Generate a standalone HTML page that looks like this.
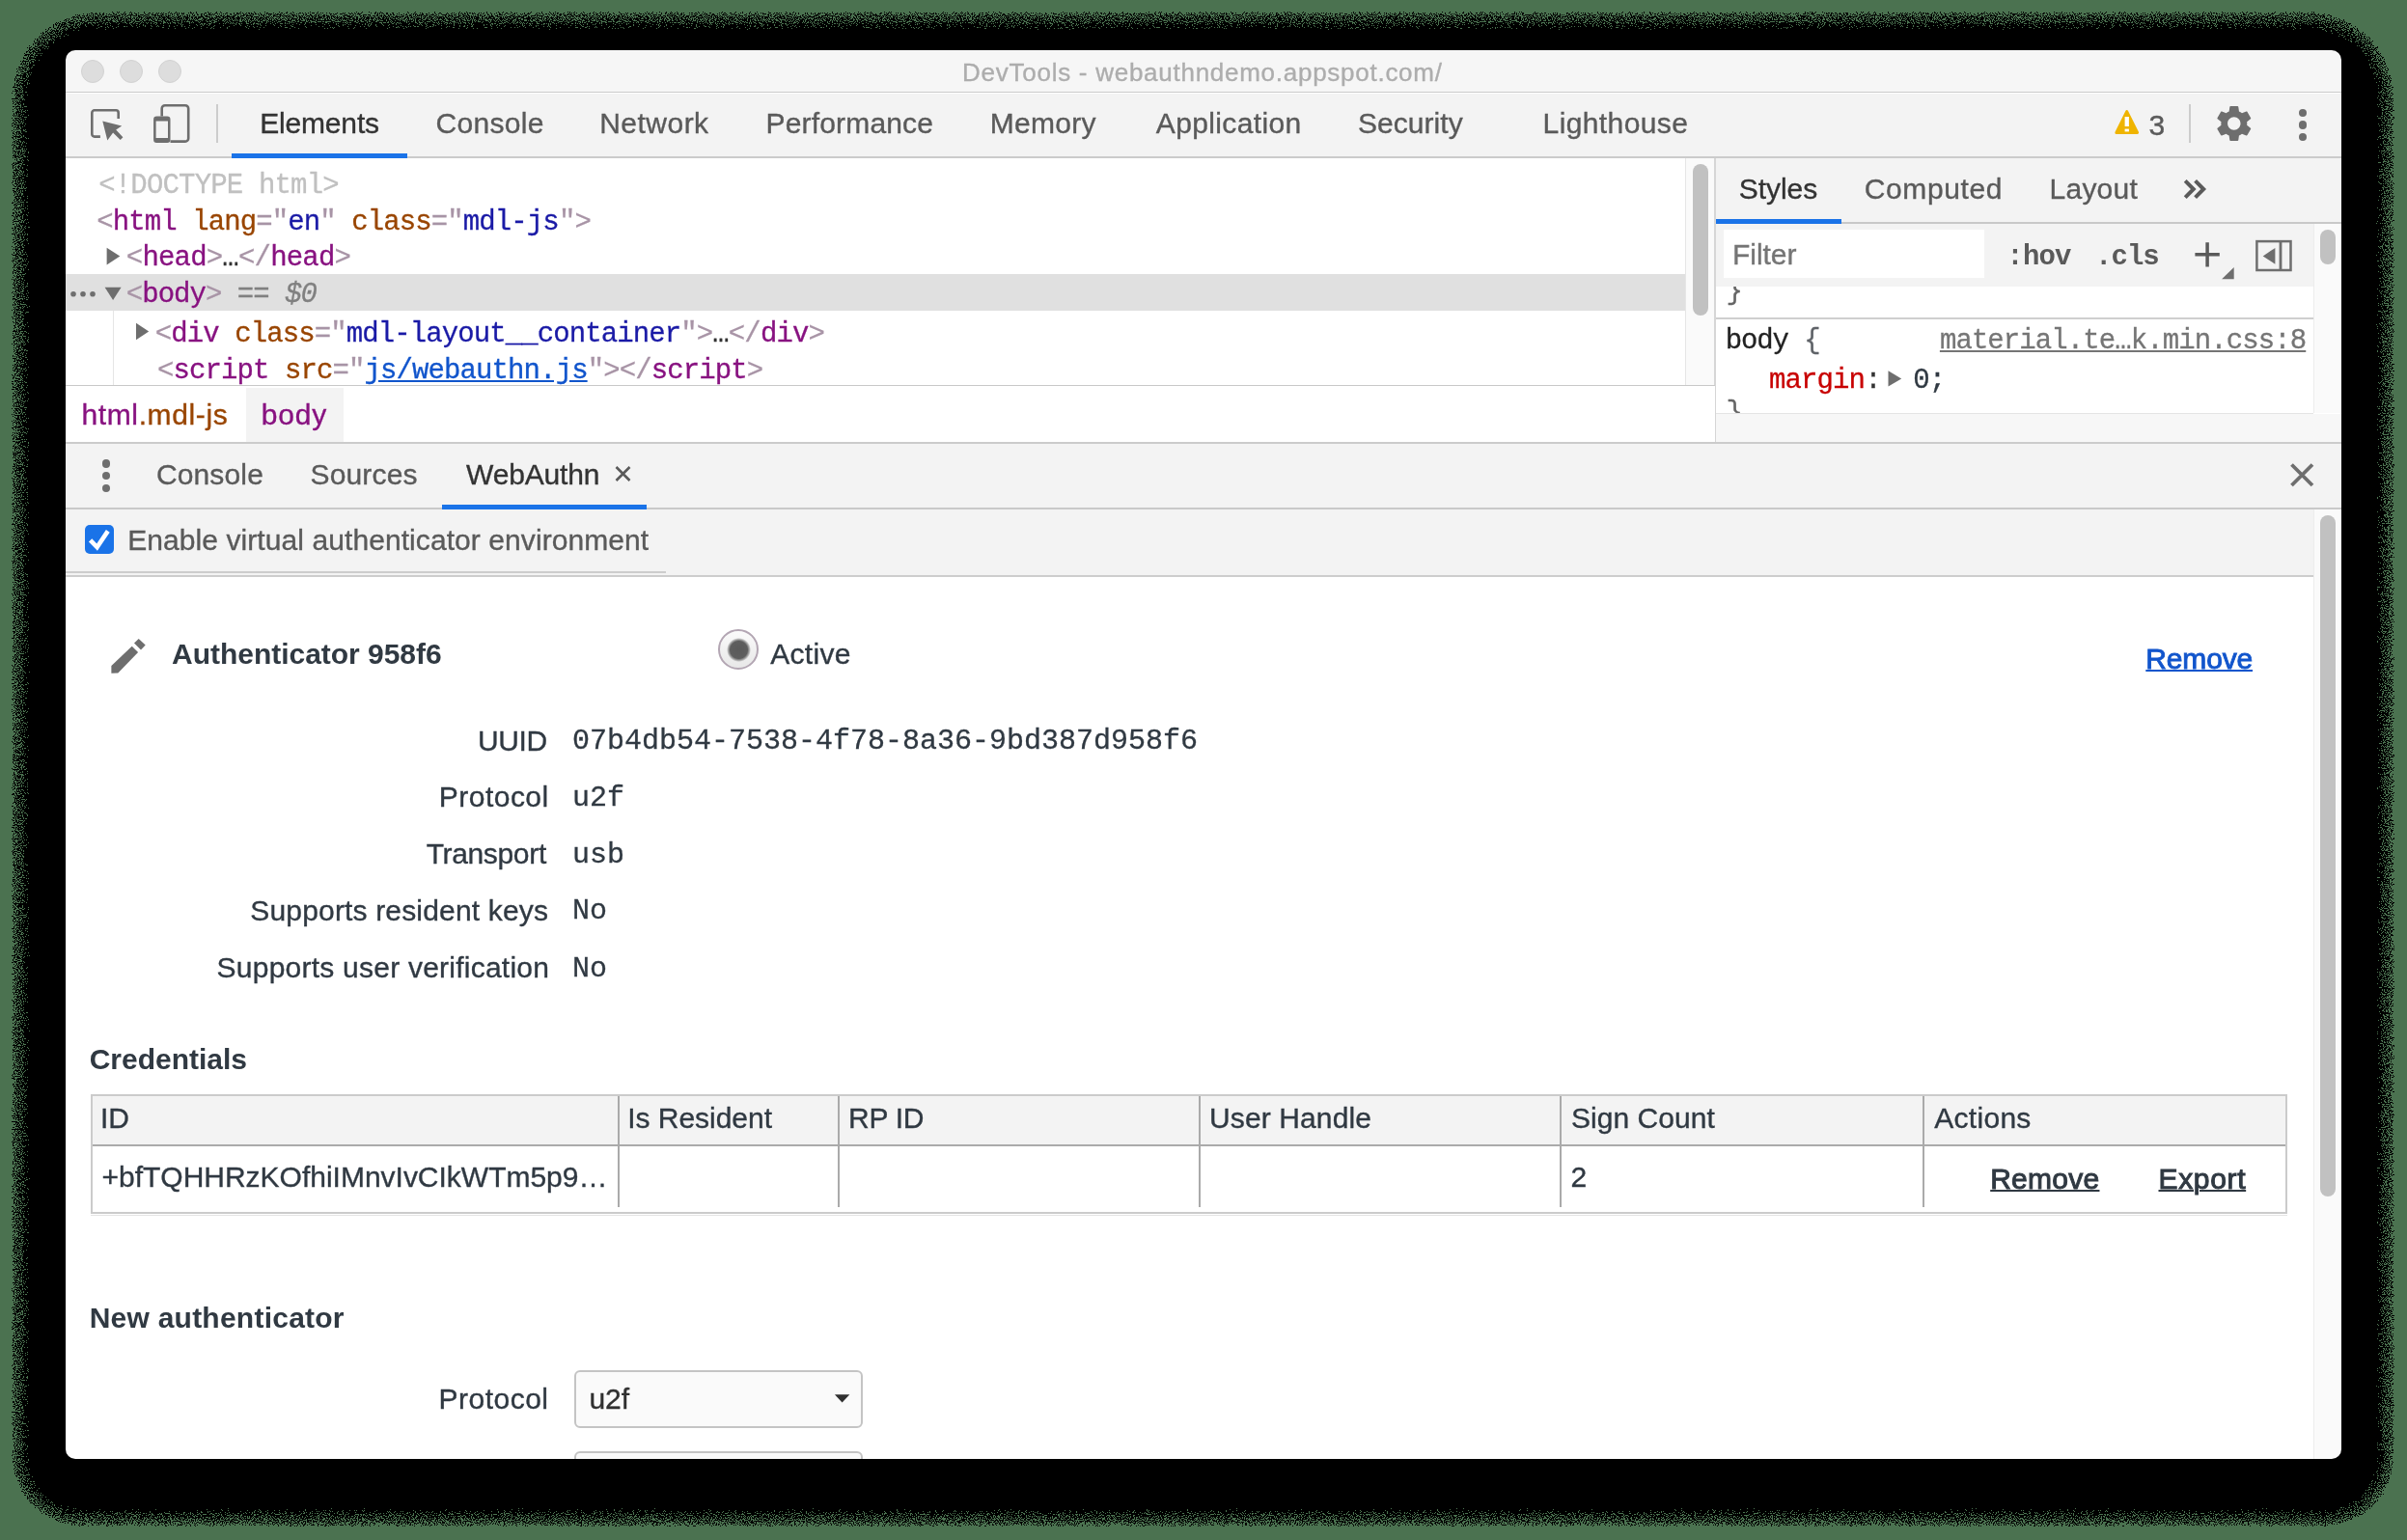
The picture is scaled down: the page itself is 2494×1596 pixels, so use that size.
<!DOCTYPE html>
<html lang="en"><head><meta charset="utf-8"><title>DevTools - webauthndemo.appspot.com/</title>
<style>
html,body{margin:0;padding:0;}
body{width:2494px;height:1596px;overflow:hidden;background:#4b7250;position:relative;font-family:"Liberation Sans",sans-serif;}
.b{position:absolute;box-sizing:border-box;}
.t{-webkit-text-stroke:0.35px currentColor;position:absolute;white-space:pre;font-family:"Liberation Sans",sans-serif;font-size:30px;line-height:30px;color:#303942;}
.m{-webkit-text-stroke:0.3px currentColor;position:absolute;white-space:pre;font-family:"Liberation Mono",monospace;font-size:29px;line-height:30px;letter-spacing:-0.9px;color:#222;}
.tab{color:#5a5a5a;}
.sel{color:#333;}
.bold{font-weight:bold;-webkit-text-stroke:0;}
.tg{color:#a894a6;} .tn{color:#881280;} .an{color:#994500;} .av{color:#1a1aa6;}
.lnk{color:#1155cc;text-decoration:underline;}
svg{position:absolute;overflow:visible;}
#win{will-change:transform;position:absolute;left:0;top:0;width:2494px;height:1596px;clip-path:inset(52px 68px 84px 68px round 10px);background:#fff;}
</style></head><body>

<svg width="2494" height="1596" style="left:0;top:0" viewBox="0 0 2494 1596">
<defs><filter id="dz" x="0" y="0" width="2494" height="1596" filterUnits="userSpaceOnUse" color-interpolation-filters="sRGB">
<feGaussianBlur in="SourceAlpha" stdDeviation="6" result="bl0"/>
<feComponentTransfer in="bl0" result="bl"><feFuncA type="table" tableValues="0.000 0.000 0.330 0.363 0.395 0.428 0.461 0.493 0.511 0.525 0.539 0.553 0.568 0.582 0.596 0.610 0.624 0.638 0.652 0.666 0.680 0.695 0.710 0.725 0.739 0.754 0.769 0.784 0.799 0.814 0.828 0.843 0.858 0.875 0.902 0.928 0.955 0.981 1.000 1.000 1.000"/></feComponentTransfer>
<feTurbulence type="fractalNoise" baseFrequency="0.85" numOctaves="1" seed="7" result="nz"/>
<feComponentTransfer in="nz" result="nu"><feFuncR type="table" tableValues="0.0000 0.0000 0.0001 0.0003 0.0018 0.0076 0.0261 0.0727 0.1658 0.3137 0.5000 0.6863 0.8342 0.9273 0.9739 0.9924 0.9982 0.9997 0.9999 1.0000 1.0000"/></feComponentTransfer>
<feColorMatrix in="nu" type="matrix" values="0 0 0 0 0  0 0 0 0 0  0 0 0 0 0  1 0 0 0 0" result="n1"/>
<feComposite in="bl" in2="n1" operator="arithmetic" k1="0" k2="1.04" k3="1" k4="-0.52" result="c1"/>
<feComponentTransfer in="c1"><feFuncA type="discrete" tableValues="0 1"/></feComponentTransfer>
</filter></defs>
<path d="M100.5 22.5 H2392.5 A78 78 0 0 1 2470.5 100.5 V1509.5 A62 62 0 0 1 2408.5 1571.5 H84.5 A62 62 0 0 1 22.5 1509.5 V100.5 A78 78 0 0 1 100.5 22.5 Z" fill="#000" filter="url(#dz)"/>
<rect x="40" y="40" width="2412" height="1512" rx="50" fill="#000"/>
</svg>

<div id="win">
<div class="b " style="left:68px;top:52px;width:2358px;height:44px;background:#f6f6f6;"></div>
<div class="b " style="left:68px;top:95px;width:2358px;height:1.2999999999999972px;background:#cacaca;"></div>
<div class="b " style="left:84px;top:62px;width:24px;height:24px;border-radius:50%;background:#dddddd;border:1.5px solid #d2d2d2;"></div>
<div class="b " style="left:124px;top:62px;width:24px;height:24px;border-radius:50%;background:#dddddd;border:1.5px solid #d2d2d2;"></div>
<div class="b " style="left:164px;top:62px;width:24px;height:24px;border-radius:50%;background:#dddddd;border:1.5px solid #d2d2d2;"></div>
<span class="t title" style="left:997.10px;top:62.1px;font-size:26px;line-height:26px;letter-spacing:0.734px;color:#adadad;">DevTools - webauthndemo.appspot.com/</span>
<div class="b " style="left:68px;top:97px;width:2358px;height:65px;background:#f3f3f3;"></div>
<div class="b " style="left:68px;top:162px;width:2358px;height:2px;background:#cbcbcb;"></div>
<div class="b " style="left:240px;top:159px;width:182px;height:5px;background:#1a73e8;"></div>
<svg style="left:90px;top:105px" width="44" height="46" viewBox="90 105 44 46">
<path d="M122.7 122.9 V116.9 a2.6 2.6 0 0 0 -2.6 -2.6 H97.9 a2.6 2.6 0 0 0 -2.6 2.6 V139 a2.6 2.6 0 0 0 2.6 2.6 H103.9" fill="none" stroke="#6e6e6e" stroke-width="2.6"/>
<path d="M106.3 125.6 L126.2 130.6 L120.2 134.6 L127.4 142.3 L124.7 145.0 L117.1 137.6 L111.3 145.5 Z" fill="#6e6e6e"/>
</svg>
<svg style="left:155px;top:104px" width="46" height="48" viewBox="155 104 46 48">
<path d="M167.7 120.6 V112.5 a3.2 3.2 0 0 1 3.2 -3.2 H192 a3.2 3.2 0 0 1 3.2 3.2 V143.4 a3.2 3.2 0 0 1 -3.2 3.2 H176.5" fill="none" stroke="#6e6e6e" stroke-width="2.6"/>
<path fill-rule="evenodd" d="M162.3 120.6 H173.3 a3.2 3.2 0 0 1 3.2 3.2 V144.7 a3.2 3.2 0 0 1 -3.2 3.2 H162.3 a3.2 3.2 0 0 1 -3.2 -3.2 V123.8 a3.2 3.2 0 0 1 3.2 -3.2 Z M161.6 125.6 V143.1 H174 V125.6 Z" fill="#6e6e6e"/>
</svg>
<div class="b " style="left:224px;top:108px;width:2px;height:40px;background:#cccccc;"></div>
<span class="t sel tb_Elements" style="left:269.20px;top:112.8px;letter-spacing:-0.171px;">Elements</span>
<span class="t tab tb_Console" style="left:451.60px;top:112.8px;letter-spacing:0.283px;">Console</span>
<span class="t tab tb_Network" style="left:621.20px;top:112.8px;letter-spacing:0.483px;">Network</span>
<span class="t tab tb_Performance" style="left:793.60px;top:112.8px;letter-spacing:0.160px;">Performance</span>
<span class="t tab tb_Memory" style="left:1025.80px;top:112.8px;letter-spacing:0.280px;">Memory</span>
<span class="t tab tb_Application" style="left:1197.80px;top:112.8px;letter-spacing:0.360px;">Application</span>
<span class="t tab tb_Security" style="left:1407.00px;top:112.8px;letter-spacing:0.043px;">Security</span>
<span class="t tab tb_Lighthouse" style="left:1598.60px;top:112.8px;letter-spacing:0.389px;">Lighthouse</span>
<svg style="left:2188px;top:110px" width="32" height="32" viewBox="2188 110 32 32">
<path d="M2203.7 115.6 L2214.6 137.4 H2192.9 Z" fill="#efb400" stroke="#efb400" stroke-width="3" stroke-linejoin="round"/>
<rect x="2201.6" y="121" width="4.3" height="10" fill="#fff"/><rect x="2201.6" y="133.6" width="4.3" height="2.8" fill="#fff"/>
</svg>
<span class="t tab n3" style="left:2226.40px;top:115.0px;">3</span>
<div class="b " style="left:2268px;top:108px;width:2px;height:40px;background:#cccccc;"></div>
<svg style="left:0;top:0" width="2494" height="1596"><g transform="translate(2292.36,105.56) scale(1.8698)"><path d="M19.14,12.94c0.04-0.3,0.06-0.61,0.06-0.94c0-0.32-0.02-0.64-0.07-0.94l2.03-1.58c0.18-0.14,0.23-0.41,0.12-0.61 l-1.92-3.32c-0.12-0.22-0.37-0.29-0.59-0.22l-2.39,0.96c-0.5-0.38-1.03-0.7-1.62-0.94L14.4,2.81c-0.04-0.24-0.24-0.41-0.48-0.41 h-3.84c-0.24,0-0.43,0.17-0.47,0.41L9.25,5.35C8.66,5.59,8.12,5.92,7.63,6.29L5.24,5.33c-0.22-0.08-0.47,0-0.59,0.22L2.74,8.87 C2.62,9.08,2.66,9.34,2.86,9.48l2.03,1.58C4.84,11.36,4.8,11.69,4.8,12s0.02,0.64,0.07,0.94l-2.03,1.58 c-0.18,0.14-0.23,0.41-0.12,0.61l1.92,3.32c0.12,0.22,0.37,0.29,0.59,0.22l2.39-0.96c0.5,0.38,1.03,0.7,1.62,0.94l0.36,2.54 c0.05,0.24,0.24,0.41,0.48,0.41h3.84c0.24,0,0.44-0.17,0.47-0.41l0.36-2.54c0.59-0.24,1.13-0.56,1.62-0.94l2.39,0.96 c0.22,0.08,0.47,0,0.59-0.22l1.92-3.32c0.12-0.22,0.07-0.47-0.12-0.61L19.14,12.94z M12,15.6c-1.98,0-3.6-1.62-3.6-3.6 s1.62-3.6,3.6-3.6s3.6,1.62,3.6,3.6S13.98,15.6,12,15.6z" fill="#6e6e6e"/></g></svg>
<div class="b " style="left:2382.0px;top:112.6px;width:8.399999999999636px;height:8.400000000000006px;border-radius:50%;background:#6e6e6e;"></div>
<div class="b " style="left:2382.0px;top:125.2px;width:8.399999999999636px;height:8.399999999999991px;border-radius:50%;background:#6e6e6e;"></div>
<div class="b " style="left:2382.0px;top:137.70000000000002px;width:8.399999999999636px;height:8.399999999999977px;border-radius:50%;background:#6e6e6e;"></div>
<div class="b " style="left:68px;top:164px;width:1678px;height:235px;background:#fff;"></div>
<div class="b " style="left:68px;top:284px;width:1678px;height:37.5px;background:#e0e0e0;"></div>
<div class="b " style="left:116.5px;top:321.5px;width:1.5px;height:77.5px;background:#e6e6e6;"></div>
<div class="b " style="left:1746px;top:164px;width:31px;height:235px;background:#fafafa;border-left:1.5px solid #e6e6e6;"></div>
<div class="b " style="left:1754px;top:169.5px;width:16px;height:157.5px;background:#c1c1c1;border-radius:8px;"></div>
<div class="b " style="left:1776px;top:164px;width:2px;height:294px;background:#d6d6d6;"></div>
<span class="m r0" style="left:102.20px;top:178.4px;letter-spacing:-0.829px;color:#c0c0c0;">&lt;!DOCTYPE html&gt;</span>
<span class="m r1" style="left:100.20px;top:215.8px;"><span class="tg">&lt;</span><span class="tn">html</span> <span class="an">lang</span><span class="tg">=&quot;</span><span class="av">en</span><span class="tg">&quot;</span> <span class="an">class</span><span class="tg">=&quot;</span><span class="av">mdl-js</span><span class="tg">&quot;&gt;</span></span>
<span class="m r2" style="left:130.80px;top:253.4px;letter-spacing:-0.815px;"><span class="tg">&lt;</span><span class="tn">head</span><span class="tg">&gt;</span><span style="color:#333">…</span><span class="tg">&lt;/</span><span class="tn">head</span><span class="tg">&gt;</span></span>
<span class="m r3" style="left:130.80px;top:291.1px;letter-spacing:-0.973px;"><span class="tg">&lt;</span><span class="tn">body</span><span class="tg">&gt;</span><span style="color:#808080"> == <i>$0</i></span></span>
<span class="m r4" style="left:160.70px;top:331.8px;"><span class="tg">&lt;</span><span class="tn">div</span> <span class="an">class</span><span class="tg">=&quot;</span><span class="av">mdl-layout__container</span><span class="tg">&quot;&gt;</span><span style="color:#333">…</span><span class="tg">&lt;/</span><span class="tn">div</span><span class="tg">&gt;</span></span>
<span class="m r5" style="left:163.00px;top:369.6px;"><span class="tg">&lt;</span><span class="tn">script</span> <span class="an">src</span><span class="tg">=&quot;</span><span class="lnk">js/webauthn.js</span><span class="tg">&quot;&gt;</span><span class="tg">&lt;/</span><span class="tn">script</span><span class="tg">&gt;</span></span>
<svg style="left:0;top:0" width="2494" height="1596">
<path d="M110.6 256.7 L124.3 265.5 L110.6 274.4 Z" fill="#6e6e6e"/>
<path d="M108.6 297.8 H125.6 L117.1 311 Z" fill="#6e6e6e"/>
<path d="M141 334.7 L154.2 343.4 L141 352.2 Z" fill="#6e6e6e"/>
<circle cx="76" cy="304.8" r="2.8" fill="#6e6e6e"/><circle cx="86" cy="304.8" r="2.8" fill="#6e6e6e"/><circle cx="96" cy="304.8" r="2.8" fill="#6e6e6e"/>
</svg>
<div class="b " style="left:68px;top:398.5px;width:1709px;height:1.5px;background:#c8c8c8;"></div>
<div class="b " style="left:68px;top:400px;width:1709px;height:58px;background:#fff;"></div>
<div class="b " style="left:254.5px;top:402px;width:101.5px;height:55.5px;background:#f3f3f3;"></div>
<span class="t bc1" style="left:84.50px;top:414.8px;letter-spacing:0.620px;"><span style="color:#881280">html</span><span style="color:#994500">.mdl-js</span></span>
<span class="t bc2" style="left:270.70px;top:414.8px;letter-spacing:0.867px;color:#881280;">body</span>
<div class="b " style="left:1778px;top:164px;width:648px;height:67px;background:#f3f3f3;"></div>
<div class="b " style="left:1778px;top:230px;width:648px;height:2px;background:#c8c8c8;"></div>
<div class="b " style="left:1778px;top:226.5px;width:130px;height:5.0px;background:#1a73e8;"></div>
<span class="t sel st1" style="left:1801.70px;top:181.0px;letter-spacing:-0.020px;">Styles</span>
<span class="t tab st2" style="left:1931.80px;top:181.0px;letter-spacing:0.600px;">Computed</span>
<span class="t tab st3" style="left:2123.60px;top:181.0px;letter-spacing:0.220px;">Layout</span>
<svg style="left:0;top:0" width="2494" height="1596"><path d="M2264.2 187.4 L2272.8 196 L2264.2 204.6 M2274.6 187.4 L2283.2 196 L2274.6 204.6" fill="none" stroke="#5a5a5a" stroke-width="4"/></svg>
<div class="b " style="left:1778px;top:232px;width:619px;height:65px;background:#f3f3f3;"></div>
<div class="b " style="left:1786px;top:238px;width:270px;height:50px;background:#fff;"></div>
<span class="t flt" style="left:1795.00px;top:248.7px;letter-spacing:-0.040px;color:#757575;">Filter</span>
<span class="m hov" style="left:2079.30px;top:252.2px;letter-spacing:-0.800px;font-weight:bold;color:#5a5a5a;-webkit-text-stroke:0;">:hov</span>
<span class="m cls" style="left:2171.10px;top:252.2px;letter-spacing:-1.000px;font-weight:bold;color:#5a5a5a;-webkit-text-stroke:0;">.cls</span>
<svg style="left:0;top:0" width="2494" height="1596">
<path d="M2274.4 263.8 H2299.8 M2287.1 251.2 V276.4" stroke="#5a5a5a" stroke-width="3.5" fill="none"/>
<path d="M2302.1 289.2 H2314.7 V276.9 Z" fill="#6e6e6e"/>
<rect x="2338.4" y="250.1" width="35.1" height="29.9" fill="none" stroke="#6e6e6e" stroke-width="2.5"/>
<path d="M2363 250 V280" stroke="#6e6e6e" stroke-width="2.8"/>
<path d="M2344.7 265.4 L2357.4 256.9 V273.8 Z" fill="#6e6e6e"/>
</svg>
<div class="b " style="left:2397px;top:232px;width:29px;height:196px;background:#fafafa;border-left:1.5px solid #ececec;"></div>
<div class="b " style="left:2404px;top:238px;width:16px;height:36px;background:#c1c1c1;border-radius:8px;"></div>
<div class="b " style="left:1778px;top:297px;width:619px;height:131px;background:#fff;"></div>
<div class="b " style="left:1778px;top:328.5px;width:619px;height:2.0px;background:#cfcfcf;"></div>
<div class="b" style="left:1778px;top:297px;width:619px;height:31px;overflow:hidden;"><span class="m" style="left:10.5px;top:-8.7px;color:#666;">}</span></div>
<span class="m sb" style="left:1787.70px;top:339.3px;letter-spacing:-1.100px;">body <span style="color:#5f6368">{</span></span>
<span class="m sm" style="left:2009.90px;top:339.3px;letter-spacing:-0.909px;color:#757575;text-decoration:underline;">material.te…k.min.css:8</span>
<span class="m mg" style="left:1833.10px;top:379.6px;"><span style="color:#c80000">margin</span><span style="color:#333">:</span></span>
<span class="m mz" style="left:1982.30px;top:379.6px;color:#303942;">0;</span>
<svg style="left:0;top:0" width="2494" height="1596"><path d="M1956.5 384.2 L1970.2 392.4 L1956.5 400.6 Z" fill="#6e6e6e"/></svg>
<div class="b" style="left:1778px;top:404px;width:619px;height:24px;overflow:hidden;"><span class="m" style="left:10.5px;top:10.3px;color:#666;">}</span></div>
<div class="b " style="left:1778px;top:427.5px;width:619px;height:1.5px;background:#e4e4e4;"></div>
<div class="b " style="left:1778px;top:429px;width:648px;height:29px;background:#f7f7f7;"></div>
<div class="b " style="left:68px;top:458px;width:2358px;height:2px;background:#cbcbcb;"></div>
<div class="b " style="left:68px;top:460px;width:2358px;height:67px;background:#f3f3f3;"></div>
<div class="b " style="left:68px;top:526px;width:2358px;height:2px;background:#c9c9c9;"></div>
<div class="b " style="left:458px;top:523px;width:212px;height:5.5px;background:#1a73e8;"></div>
<div class="b " style="left:105.8px;top:476.3px;width:8.400000000000006px;height:8.399999999999977px;border-radius:50%;background:#6e6e6e;"></div>
<div class="b " style="left:105.8px;top:488.90000000000003px;width:8.400000000000006px;height:8.399999999999977px;border-radius:50%;background:#6e6e6e;"></div>
<div class="b " style="left:105.8px;top:501.6px;width:8.400000000000006px;height:8.399999999999977px;border-radius:50%;background:#6e6e6e;"></div>
<span class="t tab d1" style="left:161.90px;top:477.3px;letter-spacing:0.150px;">Console</span>
<span class="t tab d2" style="left:321.60px;top:477.3px;letter-spacing:0.133px;">Sources</span>
<span class="t sel d3" style="left:483.10px;top:477.3px;letter-spacing:-0.186px;">WebAuthn</span>
<svg style="left:0;top:0" width="2494" height="1596">
<path d="M638.5 484 L652.5 498 M652.5 484 L638.5 498" stroke="#5a5a5a" stroke-width="2.6" fill="none"/>
<path d="M2374.5 481.5 L2396 503 M2396 481.5 L2374.5 503" stroke="#6e6e6e" stroke-width="3.8" fill="none"/>
</svg>
<div class="b " style="left:68px;top:528px;width:2329px;height:68px;background:#f3f3f3;"></div>
<div class="b " style="left:68px;top:592px;width:622px;height:2px;background:#cdcdcd;"></div>
<div class="b " style="left:68px;top:596px;width:2329px;height:2px;background:#cdcdcd;"></div>
<div class="b " style="left:88px;top:544px;width:30px;height:30px;background:#1a73e8;border-radius:5px;"></div>
<svg style="left:0;top:0" width="2494" height="1596"><path d="M93.6 559.8 L100.6 567 L111.8 550.4" stroke="#fff" stroke-width="4.6" fill="none"/></svg>
<span class="t tab cbl" style="left:132.20px;top:545.2px;letter-spacing:0.077px;">Enable virtual authenticator environment</span>
<div class="b " style="left:2397px;top:528px;width:29px;height:984px;background:#fafafa;border-left:1.5px solid #ececec;"></div>
<div class="b " style="left:2404px;top:534px;width:16px;height:706px;background:#c1c1c1;border-radius:8px;"></div>
<div class="b " style="left:68px;top:598px;width:2329px;height:914px;background:#fff;"></div>
<svg style="left:0;top:0" width="2494" height="1596">
<path d="M115.4 690.1 L136.7 669.7 L143.1 676.1 L122.3 697.4 L115.4 697.7 Z" fill="#6e6e6e"/>
<path d="M139 666.5 L143.7 662.1 L150.7 668.5 L146 673.5 Z" fill="#6e6e6e"/>
</svg>
<span class="t bold a1" style="left:178.00px;top:663.0px;letter-spacing:-0.022px;">Authenticator 958f6</span>
<div class="b " style="left:744px;top:652px;width:42px;height:42px;border-radius:50%;border:2px solid #b3a6b3;background:linear-gradient(#fbfbfb,#e8e8e8);"></div>
<div class="b " style="left:752.5px;top:660.5px;width:25.0px;height:25.0px;border-radius:50%;background:radial-gradient(circle closest-side,#5a5a5a 0,#5e5e5e 72%,rgba(96,96,96,0.55) 86%,rgba(120,120,120,0) 100%);"></div>
<span class="t a2" style="left:798.30px;top:662.8px;letter-spacing:0.280px;">Active</span>
<span class="t rm1" style="left:2223.30px;top:668.1px;letter-spacing:-0.160px;color:#1155cc;text-decoration:underline;-webkit-text-stroke:0.9px #1155cc;text-decoration-thickness:2px;">Remove</span>
<span class="t lab0" style="right:1927.13px;top:752.6px;letter-spacing:-0.333px;">UUID</span>
<span class="m val0" style="left:593px;top:753.1px;font-size:30px;letter-spacing:0;color:#303942;">07b4db54-7538-4f78-8a36-9bd387d958f6</span>
<span class="t lab1" style="right:1925.31px;top:811.3px;letter-spacing:0.486px;">Protocol</span>
<span class="m val1" style="left:593px;top:811.8px;font-size:30px;letter-spacing:0;color:#303942;">u2f</span>
<span class="t lab2" style="right:1928.14px;top:870.4px;letter-spacing:-0.337px;">Transport</span>
<span class="m val2" style="left:593px;top:870.9px;font-size:30px;letter-spacing:0;color:#303942;">usb</span>
<span class="t lab3" style="right:1925.94px;top:928.5px;letter-spacing:0.162px;">Supports resident keys</span>
<span class="m val3" style="left:593px;top:929.0px;font-size:30px;letter-spacing:0;color:#303942;">No</span>
<span class="t lab4" style="right:1924.87px;top:988.3px;letter-spacing:0.232px;">Supports user verification</span>
<span class="m val4" style="left:593px;top:988.8px;font-size:30px;letter-spacing:0;color:#303942;">No</span>
<span class="t bold cr" style="left:92.70px;top:1082.5px;letter-spacing:-0.010px;">Credentials</span>
<div class="b " style="left:94px;top:1134.3px;width:2276px;height:124.20000000000005px;background:#fff;border:2px solid #cbcbcb;"></div>
<div class="b " style="left:96px;top:1136.3px;width:2272px;height:50.700000000000045px;background:#f3f3f3;"></div>
<div class="b " style="left:96px;top:1186.2px;width:2272px;height:2.0px;background:#aaaaaa;"></div>
<div class="b " style="left:639.7px;top:1136.3px;width:2.0px;height:115.20000000000005px;background:#aaaaaa;"></div>
<div class="b " style="left:867.6px;top:1136.3px;width:2.0px;height:115.20000000000005px;background:#aaaaaa;"></div>
<div class="b " style="left:1241.9px;top:1136.3px;width:2.0px;height:115.20000000000005px;background:#aaaaaa;"></div>
<div class="b " style="left:1616.0px;top:1136.3px;width:2.0px;height:115.20000000000005px;background:#aaaaaa;"></div>
<div class="b " style="left:1992.0px;top:1136.3px;width:2.0px;height:115.20000000000005px;background:#aaaaaa;"></div>
<div class="b " style="left:94px;top:1258.5px;width:2276px;height:1.7000000000000455px;background:#e4e4e4;"></div>
<span class="t h0" style="left:104.00px;top:1144.2px;">ID</span>
<span class="t h1" style="left:650.20px;top:1144.2px;letter-spacing:-0.030px;">Is Resident</span>
<span class="t h2" style="left:879.10px;top:1144.2px;letter-spacing:-0.275px;">RP ID</span>
<span class="t h3" style="left:1253.00px;top:1144.2px;letter-spacing:0.120px;">User Handle</span>
<span class="t h4" style="left:1627.90px;top:1144.2px;letter-spacing:0.056px;">Sign Count</span>
<span class="t h5" style="left:2004.20px;top:1144.2px;letter-spacing:0.300px;">Actions</span>
<span class="t cid" style="left:105.50px;top:1205.1px;letter-spacing:-0.010px;">+bfTQHHRzKOfhiIMnvIvCIkWTm5p9…</span>
<span class="t c2" style="left:1627.40px;top:1205.1px;">2</span>
<span class="t rm2" style="left:2062.20px;top:1206.6px;letter-spacing:0.260px;text-decoration:underline;-webkit-text-stroke:1px #303942;text-decoration-thickness:2px;">Remove</span>
<span class="t ex" style="left:2236.50px;top:1206.6px;letter-spacing:0.660px;text-decoration:underline;-webkit-text-stroke:1px #303942;text-decoration-thickness:2px;">Export</span>
<span class="t bold na" style="left:92.70px;top:1351.0px;letter-spacing:0.238px;">New authenticator</span>
<span class="t lab5" style="right:1925.51px;top:1435.3px;letter-spacing:0.486px;">Protocol</span>
<div class="b " style="left:594.5px;top:1420px;width:299.0px;height:59.5px;background:#fafafa;border:2.5px solid #c4c4c4;border-radius:6px;"></div>
<span class="t su" style="left:610.40px;top:1434.8px;letter-spacing:-0.050px;color:#303030;">u2f</span>
<svg style="left:0;top:0" width="2494" height="1596"><path d="M864.9 1445.3 H880.3 L872.6 1453.6 Z" fill="#303030"/></svg>
<div class="b " style="left:594.5px;top:1504px;width:299.0px;height:60px;background:#fafafa;border:2.5px solid #c4c4c4;border-radius:6px;"></div>
</div>
</body></html>
